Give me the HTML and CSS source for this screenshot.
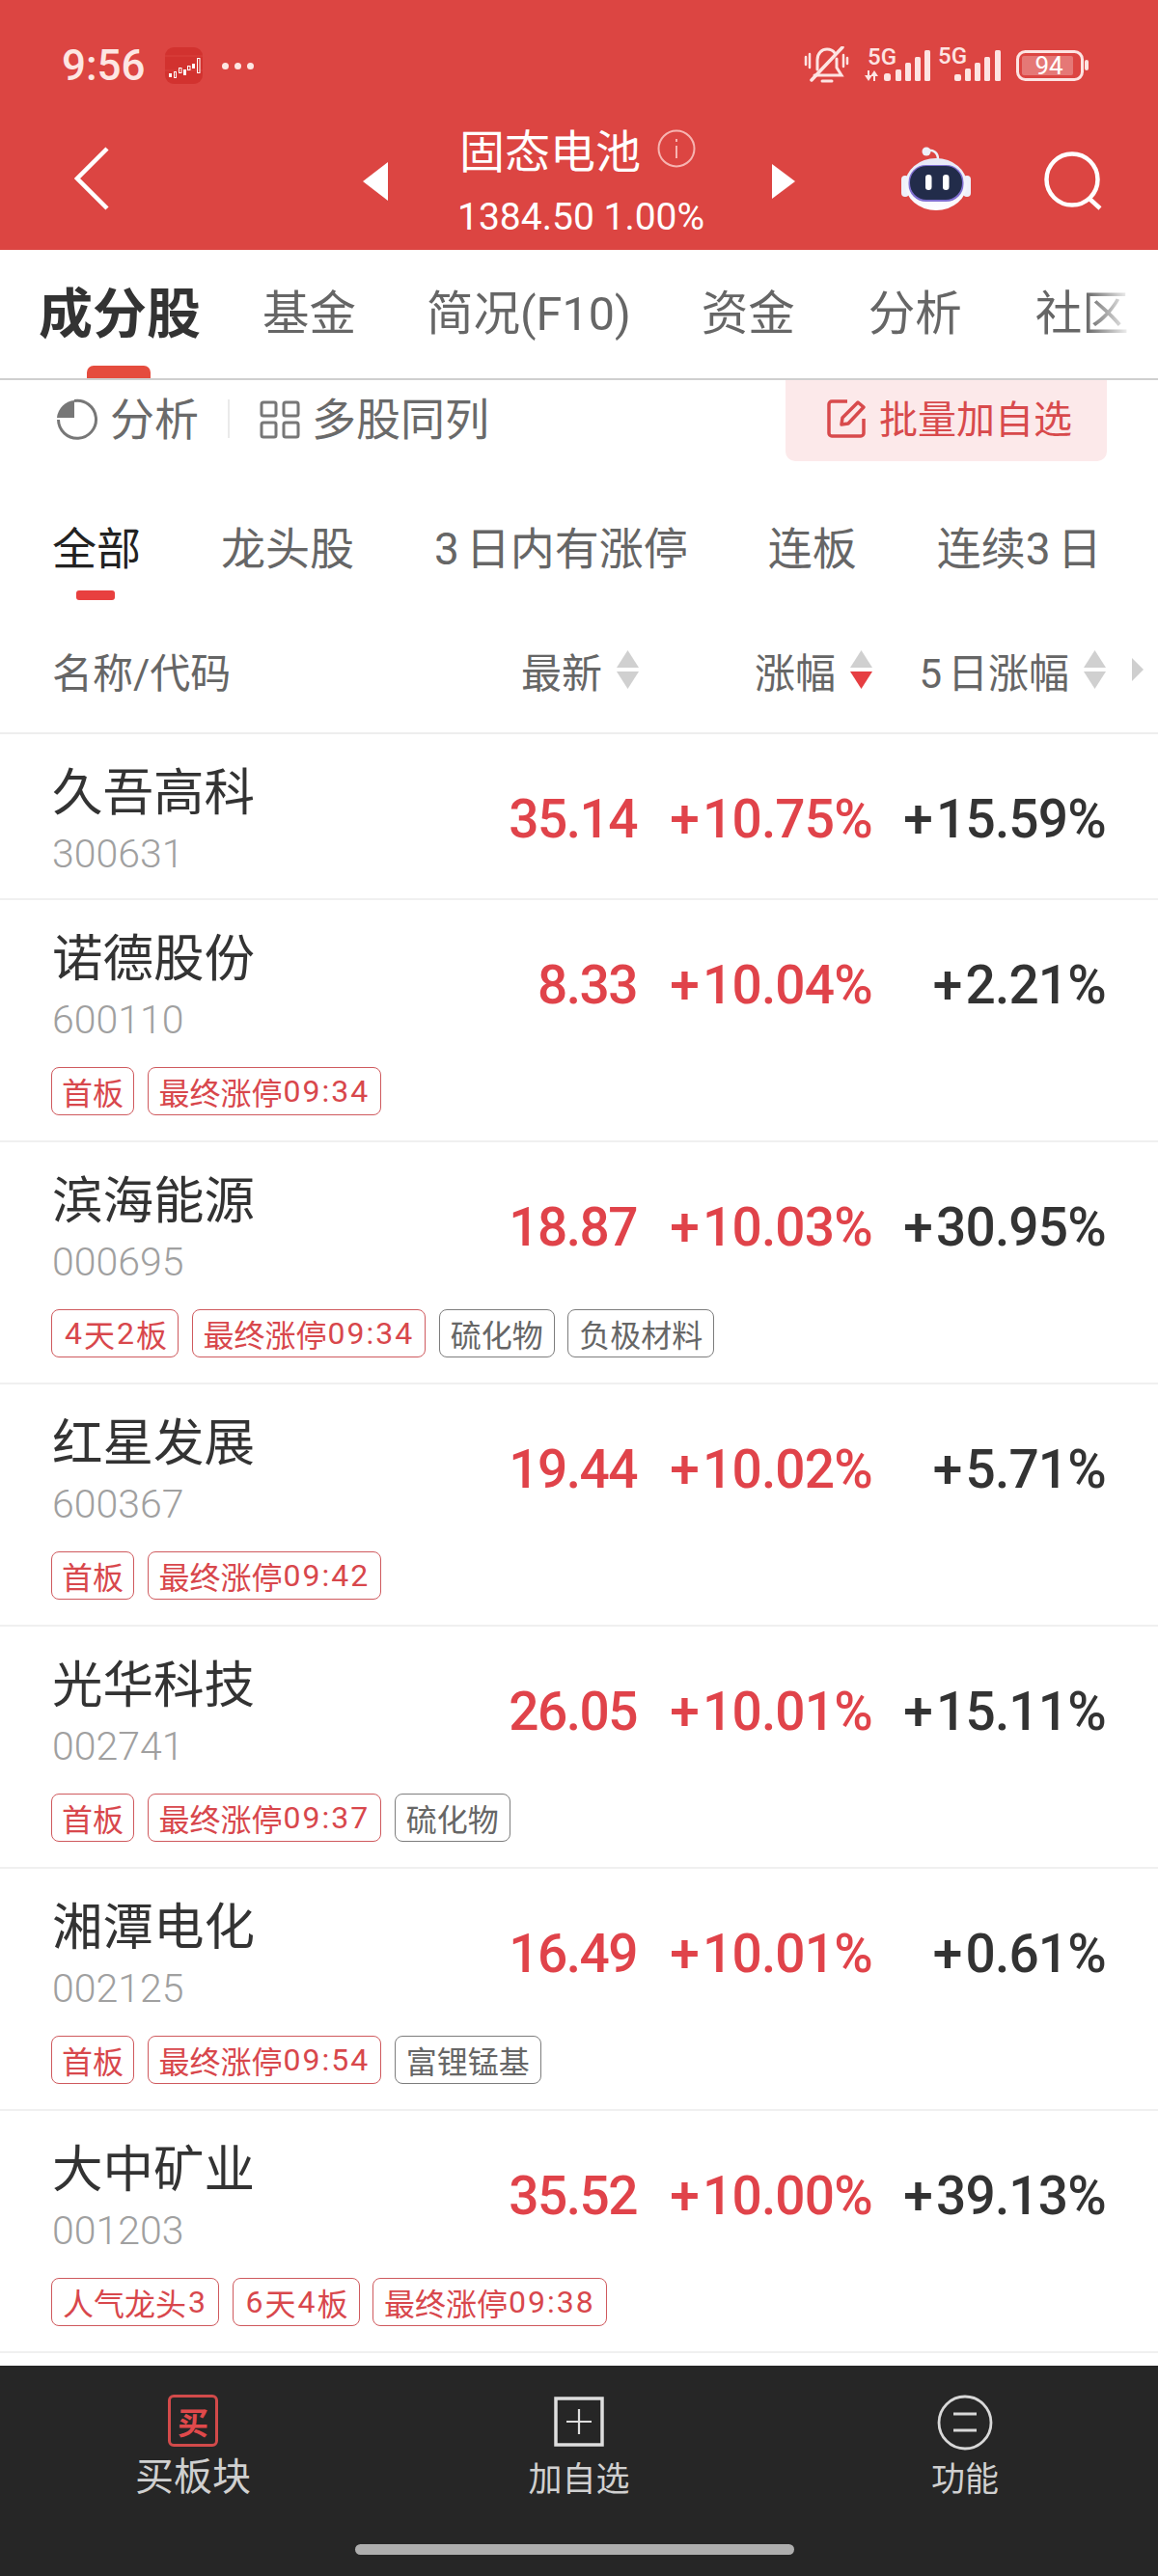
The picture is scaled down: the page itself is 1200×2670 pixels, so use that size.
FILE: index.html
```html
<!DOCTYPE html>
<html lang="zh-CN">
<head>
<meta charset="utf-8">
<title>固态电池</title>
<link rel="stylesheet" href="styles.css">
</head>
<body>
<div class="page">
  <header class="hero">
    <div class="status">
      <div class="status-left">
        <span class="clock">9:56</span>
        <svg class="app-icon" viewBox="0 0 39 38"><rect width="39" height="38" rx="9" fill="#d2322f"/><path d="M0 9H39M0 24H39" stroke="#e2524d" stroke-width="1" opacity=".5"/><g fill="#fff"><rect x="4" y="27" width="3" height="4"/><rect x="19" y="23" width="3" height="6"/><rect x="28" y="17" width="3" height="5"/></g><g fill="none" stroke="#fff"><rect x="9.500" y="25.500" width="2" height="6"/><rect x="14.500" y="21.500" width="2.500" height="5"/><rect x="23.500" y="19.500" width="2.500" height="4"/><rect x="33.500" y="11.500" width="2.500" height="15"/></g></svg>
        <span class="dots"><i></i><i></i><i></i></span>
      </div>
      <div class="status-right">
        <svg class="st-bell" viewBox="0 0 47 40" fill="none" stroke="#fde4e2" stroke-width="3" stroke-linecap="round"><path d="M14 24V14C14 7 19 3 24 3C27 3 30 4 32 7M34 13V22L39 30H11"/><path d="M40 1L8 35" stroke-width="3.500"/><path d="M2 11V19M6 8V22M41 9V21M45 12V18" stroke-width="2.500"/><path d="M19 36H29" stroke-width="3"/></svg>
        <svg class="st-sig st-sig1" viewBox="0 -6 70 42"><text class="st-5g" x="3" y="17">5G</text><g fill="#fde4e2"><path d="M3 23h2v5h3l-4 6-4-6h3zM11 34h-2v-5h-3l4-6 4 6h-3z"/><rect x="20" y="26" width="7" height="8" rx="2.500"/><rect x="32" y="22" width="6" height="12" rx="1.500"/><rect x="42" y="15" width="6" height="19" rx="1.500"/><rect x="52" y="9" width="6" height="25" rx="1.500"/><rect x="62" y="2" width="6" height="32" rx="1.500"/></g></svg>
        <svg class="st-sig st-sig2" viewBox="0 -6 66 42"><text class="st-5g" x="0" y="16">5G</text><g fill="#fde4e2"><rect x="17" y="27" width="7" height="7" rx="2"/><rect x="28" y="21" width="6" height="13" rx="1.500"/><rect x="38" y="15" width="6" height="19" rx="1.500"/><rect x="48" y="9" width="6" height="25" rx="1.500"/><rect x="59" y="2" width="6" height="32" rx="1.500"/></g></svg>
        <svg class="st-batt" viewBox="0 0 75 32"><rect x="1.500" y="1.500" width="67" height="29" rx="8" fill="none" stroke="#fde4e2" stroke-width="3"/><rect x="6" y="6" width="53" height="20" rx="2" fill="#fff" opacity=".28"/><rect x="71" y="10" width="4" height="11" rx="2" fill="#fde4e2"/><text class="st-batt-num" x="34" y="25">94</text></svg>
      </div>
    </div>
    <nav class="navbar">
      <svg class="nav-back" viewBox="0 0 36 66" fill="none" stroke="#fff" stroke-width="4.500"><path d="M34 2L3 33L34 64"/></svg>
      <div class="nav-center">
        <svg class="tri-left" viewBox="0 0 26 40"><path d="M26 0V40L0 20Z" fill="#fff"/></svg>
        <div class="nav-title">
          <div class="title-line"><span class="title-text">固态电池</span>
            <svg class="info" viewBox="0 0 40 40" fill="none" stroke="#f7b4b1" stroke-width="2"><circle cx="20" cy="20" r="18.500"/><path d="M20 17V30M20 10V13"/></svg>
          </div>
          <div class="title-sub">1384.50 1.00%</div>
        </div>
        <svg class="tri-right" viewBox="0 0 24 36"><path d="M0 0V36L24 18Z" fill="#fff"/></svg>
      </div>
      <div class="nav-actions">
        <svg class="robot" viewBox="0 0 72 66">
          <defs><linearGradient id="rb" x1="0" y1="0" x2="0" y2="1"><stop offset="0" stop-color="#e6e8f6"/><stop offset="1" stop-color="#fdfdff"/></linearGradient></defs>
          <path d="M27 4C33 3 38 6 38 13" fill="none" stroke="#eef0fa" stroke-width="2.500"/>
          <circle cx="26" cy="5" r="4.500" fill="#eef0fa"/>
          <rect x="0" y="30" width="8" height="22" rx="4" fill="#eef0fa"/>
          <rect x="64" y="30" width="8" height="22" rx="4" fill="#eef0fa"/>
          <ellipse cx="36" cy="39" rx="32" ry="27" fill="url(#rb)"/>
          <rect x="7.500" y="19" width="57" height="38" rx="18" fill="#7f6fd0"/>
          <rect x="9" y="20" width="54" height="35" rx="17" fill="#222c4a"/>
          <rect x="25" y="29" width="6.500" height="16" rx="3.200" fill="#fff"/>
          <rect x="43" y="29" width="6.500" height="16" rx="3.200" fill="#fff"/>
        </svg>
        <svg class="search" viewBox="0 0 62 62" fill="none" stroke="#fff" stroke-width="4.500"><circle cx="30" cy="30" r="26.500"/><path d="M48 50L59 60"/></svg>
      </div>
    </nav>
  </header>

  <div class="tabs">
    <span class="tab tab-on">成分股</span>
    <span class="tab">基金</span>
    <span class="tab">简况(F10)</span>
    <span class="tab">资金</span>
    <span class="tab">分析</span>
    <span class="tab">社区</span>
  </div>

  <div class="toolbar">
    <div class="tool">
      <svg class="tool-pie" viewBox="0 0 44 44"><path d="M19 2.500A19.500 19.500 0 1 1 2.500 22" fill="none" stroke="#777" stroke-width="3"/><path d="M19 2A20 20 0 0 0 1 20H19Z" fill="#777"/></svg>
      <span>分析</span>
    </div>
    <i class="tool-sep"></i>
    <div class="tool">
      <svg class="tool-grid" viewBox="0 0 42 40" fill="none" stroke="#777" stroke-width="3"><rect x="2" y="2" width="15" height="14" rx="2"/><rect x="25" y="2" width="15" height="14" rx="2"/><rect x="2" y="23" width="15" height="15" rx="2"/><rect x="25" y="23" width="15" height="15" rx="2"/></svg>
      <span>多股同列</span>
    </div>
    <div class="batch">
      <svg class="batch-icon" viewBox="0 0 40 40" fill="none" stroke="#d84a4c" stroke-width="3.500" stroke-linejoin="round"><path d="M21 2H5A3 3 0 0 0 2 5V35A3 3 0 0 0 5 38H35A3 3 0 0 0 38 35V20"/><path d="M16 19L32 3L38 8L22 25L15 26Z"/></svg>
      <span>批量加自选</span>
    </div>
  </div>

  <div class="subtabs">
    <span class="sub sub-on">全部</span>
    <span class="sub">龙头股</span>
    <span class="sub"><b class="n">3</b>日内有涨停</span>
    <span class="sub">连板</span>
    <span class="sub">连续<b class="n">3</b>日</span>
  </div>

  <div class="thead">
    <span class="th-name">名称/代码</span>
    <span class="th th-1"><span>最新</span><svg class="sort" viewBox="0 0 23 40"><path d="M11.500 0L23 18H0Z" fill="#d0d0d0"/><path d="M0 22H23L11.500 40Z" fill="#d0d0d0"/></svg></span>
    <span class="th th-2"><span>涨幅</span><svg class="sort" viewBox="0 0 23 40"><path d="M11.500 0L23 18H0Z" fill="#d0d0d0"/><path d="M0 22H23L11.500 40Z" fill="#e63e42"/></svg></span>
    <span class="th th-3"><span><b class="n-th">5</b>日涨幅</span><svg class="sort" viewBox="0 0 23 40"><path d="M11.500 0L23 18H0Z" fill="#d0d0d0"/><path d="M0 22H23L11.500 40Z" fill="#d0d0d0"/></svg></span>
    <svg class="th-more" viewBox="0 0 12 24"><path d="M0 0L12 12L0 24Z" fill="#cfcfcf"/></svg>
  </div>

  <section class="row">
    <div class="row-main">
      <div class="stock"><div class="name">久吾高科</div><div class="code">300631</div></div>
      <div class="val price up">35.14</div><div class="val up"><b class="plus">+</b>10.75%</div><div class="val"><b class="plus">+</b>15.59%</div>
    </div>
  </section>
  <section class="row">
    <div class="row-main">
      <div class="stock"><div class="name">诺德股份</div><div class="code">600110</div></div>
      <div class="val price up">8.33</div><div class="val up"><b class="plus">+</b>10.04%</div><div class="val"><b class="plus">+</b>2.21%</div>
    </div>
    <div class="tags"><span class="tag tag-2">首板</span><span class="tag">最终涨停<b class="d">09:34</b></span></div>
  </section>
  <section class="row">
    <div class="row-main">
      <div class="stock"><div class="name">滨海能源</div><div class="code">000695</div></div>
      <div class="val price up">18.87</div><div class="val up"><b class="plus">+</b>10.03%</div><div class="val"><b class="plus">+</b>30.95%</div>
    </div>
    <div class="tags"><span class="tag"><b class="d2">4</b>天<b class="d2">2</b>板</span><span class="tag">最终涨停<b class="d">09:34</b></span><span class="tag tag-gray">硫化物</span><span class="tag tag-gray">负极材料</span></div>
  </section>
  <section class="row">
    <div class="row-main">
      <div class="stock"><div class="name">红星发展</div><div class="code">600367</div></div>
      <div class="val price up">19.44</div><div class="val up"><b class="plus">+</b>10.02%</div><div class="val"><b class="plus">+</b>5.71%</div>
    </div>
    <div class="tags"><span class="tag tag-2">首板</span><span class="tag">最终涨停<b class="d">09:42</b></span></div>
  </section>
  <section class="row">
    <div class="row-main">
      <div class="stock"><div class="name">光华科技</div><div class="code">002741</div></div>
      <div class="val price up">26.05</div><div class="val up"><b class="plus">+</b>10.01%</div><div class="val"><b class="plus">+</b>15.11%</div>
    </div>
    <div class="tags"><span class="tag tag-2">首板</span><span class="tag">最终涨停<b class="d">09:37</b></span><span class="tag tag-gray">硫化物</span></div>
  </section>
  <section class="row">
    <div class="row-main">
      <div class="stock"><div class="name">湘潭电化</div><div class="code">002125</div></div>
      <div class="val price up">16.49</div><div class="val up"><b class="plus">+</b>10.01%</div><div class="val"><b class="plus">+</b>0.61%</div>
    </div>
    <div class="tags"><span class="tag tag-2">首板</span><span class="tag">最终涨停<b class="d">09:54</b></span><span class="tag tag-gray">富锂锰基</span></div>
  </section>
  <section class="row">
    <div class="row-main">
      <div class="stock"><div class="name">大中矿业</div><div class="code">001203</div></div>
      <div class="val price up">35.52</div><div class="val up"><b class="plus">+</b>10.00%</div><div class="val"><b class="plus">+</b>39.13%</div>
    </div>
    <div class="tags"><span class="tag">人气龙头<b class="d2">3</b></span><span class="tag"><b class="d2">6</b>天<b class="d2">4</b>板</span><span class="tag">最终涨停<b class="d">09:38</b></span></div>
  </section>

  <footer class="foot">
    <div class="foot-items">
      <div class="foot-item">
        <span class="buy-box">买</span>
        <span class="foot-label foot-label-lg">买板块</span>
      </div>
      <div class="foot-item">
        <svg class="foot-icon" viewBox="0 0 52 52" fill="none" stroke="#dedede"><rect x="2" y="2" width="48" height="48" stroke-width="3.500"/><path d="M26 13V39M13 26H39" stroke-width="2.200"/></svg>
        <span class="foot-label">加自选</span>
      </div>
      <div class="foot-item">
        <svg class="foot-icon foot-fn" viewBox="0 0 58 58" fill="none" stroke="#d8d8d8"><circle cx="29" cy="29" r="27" stroke-width="2.800"/><path d="M17 20H41M17 37H41" stroke-width="3"/></svg>
        <span class="foot-label">功能</span>
      </div>
    </div>
    <div class="homebar"></div>
  </footer>
</div>
</body>
</html>
```
FILE: styles.css
```css
* { box-sizing: border-box; }
html, body { margin: 0; padding: 0; background: #fff; }
body { font-family: Roboto, "Noto Sans CJK SC", sans-serif; }
.page { width: 1200px; height: 2670px; overflow: hidden; position: relative; }
b { font-weight: inherit; }
svg { display: block; flex: none; }

/* Red header */
.hero { height: 259px; background: #dc4542; }
.status { height: 116px; display: flex; justify-content: space-between; align-items: flex-start; padding: 48px 72px 0 64px; }
.status-left { display: flex; align-items: center; height: 40px; }
.clock { font-size: 44px; font-weight: 500; color: #fde6e3; line-height: 40px; width: 107px; }
.app-icon { width: 39px; height: 38px; }
.dots { display: flex; gap: 6px; margin-left: 20px; }
.dots i { width: 7px; height: 7px; border-radius: 50%; background: #fde6e3; }
.status-right { display: flex; align-items: flex-start; }
.st-bell { width: 47px; height: 40px; }
.st-sig { height: 42px; margin-top: -4px; }
.st-sig1 { width: 70px; margin-left: 16px; }
.st-sig2 { width: 66px; margin-left: 6px; }
.st-batt { width: 75px; height: 32px; margin: 4px 0 0 15px; }
.st-5g { font: 500 24px Roboto, sans-serif; fill: #fde4e2; }
.st-batt-num { font: 400 26px Roboto, sans-serif; fill: #fff; text-anchor: middle; }
.navbar { height: 143px; display: flex; align-items: flex-start; padding-left: 77px; position: relative; }
.nav-back { width: 36px; height: 66px; margin-top: 36px; }
.nav-center { display: flex; align-items: flex-start; margin-left: 263px; }
.tri-left { width: 26px; height: 40px; margin-top: 52px; }
.nav-title { width: 398px; padding-left: 74px; }
.title-line { display: flex; align-items: center; height: 50px; margin-top: 13px; }
.title-text { font-size: 47px; color: #fff; line-height: 50px; font-family: "Noto Sans CJK SC", sans-serif; }
.info { width: 40px; height: 40px; margin-left: 17px; }
.title-sub { font-size: 39px; color: #fff; line-height: 48px; margin-top: 22px; margin-left: -2px; white-space: nowrap; }
.tri-right { width: 24px; height: 36px; margin-top: 54px; }
.nav-actions { display: flex; align-items: flex-start; margin-left: 110px; }
.robot { width: 72px; height: 66px; margin-top: 36px; }
.search { width: 62px; height: 62px; margin: 40px 0 0 75px; }

/* Main tabs */
.tabs { height: 135px; display: flex; align-items: flex-start; border-bottom: 2px solid #cfcfcf; padding: 32px 0 0 40px; position: relative; }
.tabs::after { content: ""; position: absolute; top: 0; right: 0; bottom: 0; width: 75px; background: linear-gradient(90deg, rgba(255,255,255,0), #fff 65%); }
.tab { font-size: 48.500px; line-height: 70px; color: #666; margin-left: 73px; white-space: nowrap; }
.tab:nth-child(n+5) { margin-left: 76px; }
.tab-on { font-size: 56px; font-weight: 700; color: #333; margin-left: 0; margin-right: -9px; position: relative; }
.tab-on::after { content: ""; position: absolute; left: 50px; top: 88px; width: 66px; height: 13px; border-radius: 7px 7px 0 0; background: #e54c3e; }

/* Toolbar */
.toolbar { height: 85px; display: flex; align-items: flex-start; padding-left: 58px; position: relative; }
.tool { display: flex; align-items: center; gap: 12px; font-size: 46px; line-height: 44px; color: #6a6a6a; margin-top: 19px; }
.tool-pie { width: 44px; height: 44px; }
.tool-grid { width: 42px; height: 40px; }
.tool-sep { width: 2px; height: 40px; background: #eaeaea; margin: 20px 31px 0 30px; }
.batch { display: flex; align-items: center; gap: 14px; position: absolute; left: 814px; top: 0; width: 333px; height: 84px; padding: 0 0 4px 43px; background: #fce9ea; border-radius: 0 0 10px 10px; color: #d84a4c; font-size: 40px; }
.batch span { position: relative; top: -2px; }
.batch-icon { width: 40px; height: 40px; }

/* Sub tabs */
.subtabs { height: 150px; display: flex; gap: 83px; padding: 65px 0 0 54px; align-items: flex-start; }
.sub { font-size: 46px; line-height: 50px; color: #666; white-space: nowrap; position: relative; }
.sub-on { color: #222; }
.sub-on::after { content: ""; position: absolute; left: 25px; top: 68px; width: 40px; height: 10px; border-radius: 3px; background: #e8403f; }
.n { margin: 0 7px 0 0; }
.sub .n:not(:first-child) { margin-left: 1px; }

/* Table head */
.thead { height: 132px; border-bottom: 2px solid #eeeeee; position: relative; display: flex; align-items: center; padding: 0 54px 0 54px; font-size: 42px; color: #666; }
.th-name { flex: 1; }
.th { display: flex; align-items: center; gap: 15px; justify-content: flex-end; white-space: nowrap; }
.th-1 { width: 201px; }
.th-2 { width: 242px; }
.th-3 { width: 242px; }
.n-th { margin-right: 6px; }
.sort { width: 23px; height: 40px; }
.th-more { width: 12px; height: 24px; position: absolute; left: 1173px; top: 53px; }

/* Rows */
.row { border-bottom: 2px solid #f0f0f0; padding: 21px 0 26px 54px; }
.row:first-of-type { padding-bottom: 21px; }
.row-main { display: grid; grid-template-columns: 1fr 160px 244px 242px; padding-right: 54px; }
.name { font-size: 52.500px; line-height: 70px; color: #333; font-family: "Noto Sans CJK SC", sans-serif; }
.code { font-size: 41px; line-height: 50px; margin-top: 8px; color: #a0a0a0; font-weight: 300; }
.val { font-size: 55px; font-weight: 500; line-height: 70px; margin-top: 32px; text-align: right; color: #333; letter-spacing: -0.8px; white-space: nowrap; }
.val.price { letter-spacing: -1.500px; }
.val.up { color: #e0434a; }
.plus { margin-right: 4px; }
.tags { display: flex; gap: 13.500px; margin: 24px 0 0 -1px; }
.tag { height: 50px; display: flex; align-items: center; padding: 0 11px; border: 1.500px solid #cf5a5e; border-radius: 8px; font-size: 32px; color: #d8474c; white-space: nowrap; }
.tag-2 { padding: 0 10px; }
.tag-gray { border-color: #7d7d7d; color: #666; }
.d { letter-spacing: 2px; margin-left: 1px; }
.d2 { margin: 0 2px; }

/* Footer */
.foot { position: absolute; left: 0; right: 0; top: 2452px; height: 218px; background: #262626; }
.foot-items { height: 185px; display: grid; grid-template-columns: repeat(3, 400px); padding-top: 30px; }
.foot-item { display: flex; flex-direction: column; align-items: center; }
.buy-box { width: 52px; height: 54px; border: 3.500px solid #d24a4a; border-radius: 6px; display: flex; align-items: center; justify-content: center; font-size: 32px; font-weight: 700; color: #e0494b; line-height: 1; font-family: "Noto Sans CJK SC", sans-serif; }
.foot-icon { width: 52px; height: 52px; margin: 2px 0 0; }
.foot-fn { width: 58px; height: 58px; margin: 0 0 -4px; }
.foot-label { font-size: 35px; line-height: 40px; color: #d0d0d0; margin-top: 15px; }
.foot-label-lg { font-size: 40px; line-height: 42px; margin-top: 11px; }
.homebar { width: 455px; height: 11px; margin-left: 368px; border-radius: 6px; background: #aeaeae; }
```
